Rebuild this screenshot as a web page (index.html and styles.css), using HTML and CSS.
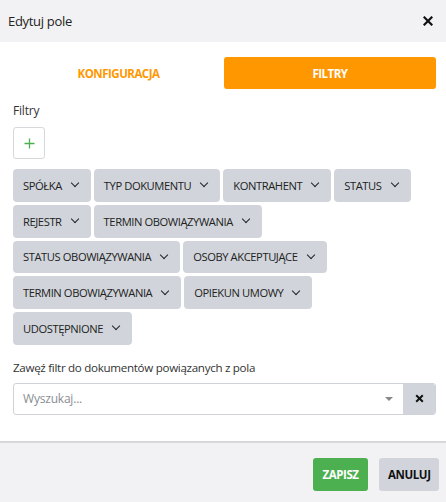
FILE: index.html
```html
<!DOCTYPE html>
<html lang="pl">
<head>
<meta charset="utf-8">
<link rel="stylesheet" href="styles.css">
</head>
<body>
<div class="modal">
  <header class="head">
    <span class="title">Edytuj pole</span>
    <span class="close">
      <svg width="10" height="10" viewBox="0 0 10 10"><path d="M1.5 1.5L8.5 8.5M8.5 1.5L1.5 8.5" stroke="#111" stroke-width="2.2" stroke-linecap="square"/></svg>
    </span>
  </header>
  <div class="body">
    <div class="tabs">
      <div class="tab">KONFIGURACJA</div>
      <div class="tab active">FILTRY</div>
    </div>
    <div class="label">Filtry</div>
    <button class="add">
      <svg width="11" height="11" viewBox="0 0 11 11"><path d="M5.5 0.5V10.5M0.5 5.5H10.5" stroke="#4caf50" stroke-width="1.3"/></svg>
    </button>
    <div class="chips">
      <span class="chip">SPÓŁKA<i class="chev"></i></span>
      <span class="chip">TYP DOKUMENTU<i class="chev"></i></span>
      <span class="chip">KONTRAHENT<i class="chev"></i></span>
      <span class="chip">STATUS<i class="chev"></i></span>
      <span class="chip">REJESTR<i class="chev"></i></span>
      <span class="chip">TERMIN OBOWIĄZYWANIA<i class="chev"></i></span>
      <span class="chip">STATUS OBOWIĄZYWANIA<i class="chev"></i></span>
      <span class="chip">OSOBY AKCEPTUJĄCE<i class="chev"></i></span>
      <span class="chip">TERMIN OBOWIĄZYWANIA<i class="chev"></i></span>
      <span class="chip">OPIEKUN UMOWY<i class="chev"></i></span>
      <span class="chip">UDOSTĘPNIONE<i class="chev"></i></span>
    </div>
    <div class="label2">Zawęź filtr do dokumentów powiązanych z pola</div>
    <div class="select">
      <div class="input">
        <span class="ph">Wyszukaj...</span>
        <span class="caret"></span>
      </div>
      <span class="clear">
        <svg width="9" height="9" viewBox="0 0 9 9"><path d="M1.2 1.2L7.8 7.8M7.8 1.2L1.2 7.8" stroke="#111" stroke-width="2"/></svg>
      </span>
    </div>
  </div>
  <footer class="foot">
    <button class="btn save">ZAPISZ</button>
    <button class="btn cancel">ANULUJ</button>
  </footer>
</div>
</body>
</html>
```
FILE: styles.css
```css
* { box-sizing: border-box; }
html, body { margin: 0; padding: 0; background: #fff; }
body { font-family: "Open Sans", "Noto Sans", sans-serif; color: #222; width: 446px; height: 502px; overflow: hidden; }
.modal { display: flex; flex-direction: column; height: 502px; }
.head { height: 42px; background: #f2f2f4; display: flex; align-items: center; justify-content: space-between; padding: 0 13px 0 8px; }
.title { font-size: 13px; color: #222; letter-spacing: -0.3px; }
.close { display: flex; }
.body { flex: 1; padding: 15px 10px 0 13px; }
.tabs { display: flex; height: 32px; margin-bottom: 13px; }
.tab { width: 211px; display: flex; align-items: center; justify-content: center; font-size: 11.5px; font-weight: 700; color: #ff9800; letter-spacing: -0.5px; border-radius: 3px; }
.tab.active { width: 212px; background: #ff9800; color: #fff; }
.label { font-size: 12px; color: #333; margin-bottom: 8px; letter-spacing: -0.2px; }
.add { display: flex; align-items: center; justify-content: center; width: 32px; height: 32px; border: 1px solid #d6d8dc; border-radius: 3px; background: #fff; padding: 0; margin-bottom: 10px; }
.chips { display: flex; flex-wrap: wrap; gap: 3px 3px; width: 410px; }
.chip { display: inline-flex; align-items: center; height: 32.75px; padding: 0 10px; background: #d1d5db; border-radius: 4px; font-size: 11.2px; color: #222; letter-spacing: -0.42px; }
.chev { display: inline-block; width: 6px; height: 6px; border-right: 1.6px solid #222; border-bottom: 1.6px solid #222; transform: rotate(45deg); margin: -4px 3px 0 10px; }
.label2 { font-size: 11.6px; color: #333; margin-top: 15px; margin-bottom: 8px; letter-spacing: -0.3px; }
.select { display: flex; height: 32px; width: 423px; border: 1px solid #cfd3d8; border-radius: 3px; overflow: hidden; }
.input { flex: 1; display: flex; align-items: center; justify-content: space-between; padding: 0 9px 0 9px; }
.ph { font-size: 12px; color: #8a8d91; letter-spacing: -0.2px; }
.caret { width: 0; height: 0; border-left: 4.5px solid transparent; border-right: 4.5px solid transparent; border-top: 4.5px solid #888; margin-right: 1px; }
.clear { width: 32px; background: #d1d5db; display: flex; align-items: center; justify-content: center; }
.foot { height: 61px; background: #f2f2f4; border-top: 2px solid #d8d8da; display: flex; align-items: center; justify-content: flex-end; padding: 0 7px 0 0; gap: 11px; }
.btn { height: 33px; border: none; border-radius: 3px; font-family: inherit; font-size: 11.5px; font-weight: 700; letter-spacing: -0.4px; padding: 0 9px; margin-top: 3px; }
.save { background: #4caf50; color: #fff; width: 55px; }
.cancel { background: #d1d5db; color: #111; width: 60px; }
```
